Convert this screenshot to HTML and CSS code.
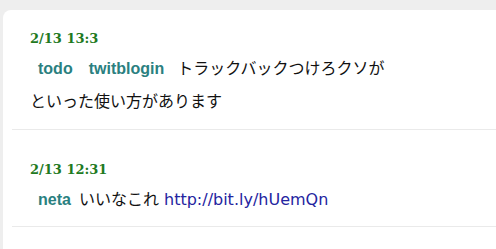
FILE: index.html
```html
<!DOCTYPE html>
<html>
    <head>
        <meta charset="utf-8">
        <title>memo</title>
        <link rel="stylesheet" href="styles.css">
    </head>
    <body>
        <div class="card">
            <div class="entry">
                <div class="date">2/13 13:3</div>
                <div class="line"><span class="tag">todo</span><span class="tag">twitblogin</span> トラックバックつけろクソが</div>
                <div class="line">といった使い方があります</div>
            </div>
            <div class="entry">
                <div class="date">2/13 12:31</div>
                <div class="line"><span class="tag">neta</span>いいなこれ <a href="#">http://bit.ly/hUemQn</a></div>
            </div>
        </div>
    </body>
</html>
```

FILE: styles.css
```css
body {
    margin: 0;
    padding: 10px 0 0 3px;
    background: #eeeeee;
    font-family: 'DejaVu Sans', 'Noto Sans CJK JP', sans-serif;
    font-size: 16px;
    color: #111;
}

.card {
    background: white;
    border-top-left-radius: 8px;
    min-height: 239px;
    padding-left: 9px;
}

.entry {
    padding: 21px 0 17px 18px;
    border-bottom: 1px solid #eaeaea;
}

.entry + .entry {
    padding-top: 32px;
    padding-bottom: 16px;
}

.date {
    font-family: 'DejaVu Serif', serif;
    font-weight: bold;
    font-size: 13px;
    color: #1f7a1f;
    line-height: 16px;
}

.line {
    margin-top: 12px;
    line-height: 20px;
}

.line + .line {
    margin-top: 13px;
}

.tag {
    margin: 0 8px;
    font-family: 'Liberation Sans', sans-serif;
    font-weight: bold;
    font-size: 16px;
    color: #2a8080;
}

.line a {
    color: #2424a0;
    text-decoration: none;
}
```
